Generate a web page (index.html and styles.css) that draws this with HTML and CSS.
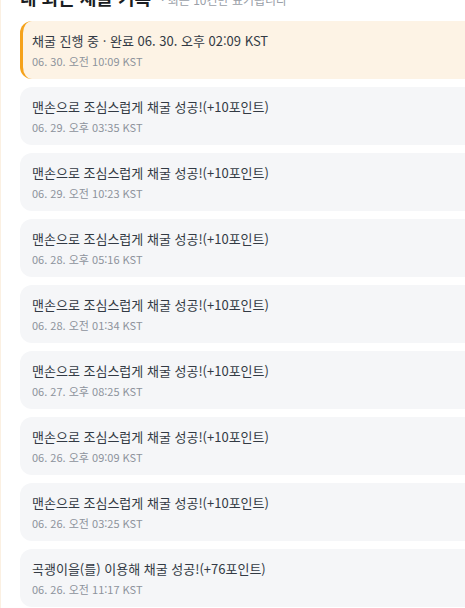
FILE: index.html
```html
<!DOCTYPE html>
<html lang="ko">
<head>
<meta charset="utf-8">
<link rel="stylesheet" href="styles.css">
</head>
<body>
<div class="page">
  <div class="header">
    <h2 class="title">내 최근 채굴 기록</h2>
    <span class="sub">· 최근 10건만 표기됩니다</span>
  </div>
  <ul class="list">
    <li class="item active">
      <div class="msg">채굴 진행 중 · 완료 06. 30. 오후 02:09 KST</div>
      <div class="time">06. 30. 오전 10:09 KST</div>
    </li>
    <li class="item">
      <div class="msg">맨손으로 조심스럽게 채굴 성공!(+10포인트)</div>
      <div class="time">06. 29. 오후 03:35 KST</div>
    </li>
    <li class="item">
      <div class="msg">맨손으로 조심스럽게 채굴 성공!(+10포인트)</div>
      <div class="time">06. 29. 오전 10:23 KST</div>
    </li>
    <li class="item">
      <div class="msg">맨손으로 조심스럽게 채굴 성공!(+10포인트)</div>
      <div class="time">06. 28. 오후 05:16 KST</div>
    </li>
    <li class="item">
      <div class="msg">맨손으로 조심스럽게 채굴 성공!(+10포인트)</div>
      <div class="time">06. 28. 오전 01:34 KST</div>
    </li>
    <li class="item">
      <div class="msg">맨손으로 조심스럽게 채굴 성공!(+10포인트)</div>
      <div class="time">06. 27. 오후 08:25 KST</div>
    </li>
    <li class="item">
      <div class="msg">맨손으로 조심스럽게 채굴 성공!(+10포인트)</div>
      <div class="time">06. 26. 오후 09:09 KST</div>
    </li>
    <li class="item">
      <div class="msg">맨손으로 조심스럽게 채굴 성공!(+10포인트)</div>
      <div class="time">06. 26. 오전 03:25 KST</div>
    </li>
    <li class="item">
      <div class="msg">곡괭이을(를) 이용해 채굴 성공!(+76포인트)</div>
      <div class="time">06. 26. 오전 11:17 KST</div>
    </li>
  </ul>
</div>
</body>
</html>
```
FILE: styles.css
```css
html, body {
  margin: 0;
  padding: 0;
  background: #ffffff;
  overflow: hidden;
}
body {
  font-family: "Noto Sans CJK KR", "Noto Sans", sans-serif;
  color: #333a44;
}
.page {
  width: 540px;
  padding-left: 19px;
  padding-bottom: 40px;
  border-left: 1px solid #fbf0e2;
  box-sizing: border-box;
}
.header {
  display: flex;
  align-items: baseline;
  gap: 10px;
  margin-top: -15px;
  height: 24px;
  margin-bottom: 12px;
}
.title {
  margin: 0;
  font-size: 18px;
  line-height: 24px;
  font-weight: 700;
  color: #1a1d22;
}
.sub {
  font-size: 12px;
  color: #9aa0a8;
}
.list {
  list-style: none;
  margin: 0;
  padding: 0;
  display: flex;
  flex-direction: column;
  gap: 8px;
}
.item {
  height: 58px;
  box-sizing: border-box;
  padding: 10px 12px 10px 9px;
  border-left: 3px solid transparent;
  border-radius: 12px;
  background: #f5f6f8;
  display: flex;
  flex-direction: column;
  gap: 2px;
}
.item.active {
  background: #fdf3e5;
  border-left-color: #f5a21b;
}
.msg {
  font-size: 13px;
  line-height: 20px;
  color: #333a44;
}
.time {
  font-size: 11px;
  line-height: 16px;
  color: #8d939c;
}
```
